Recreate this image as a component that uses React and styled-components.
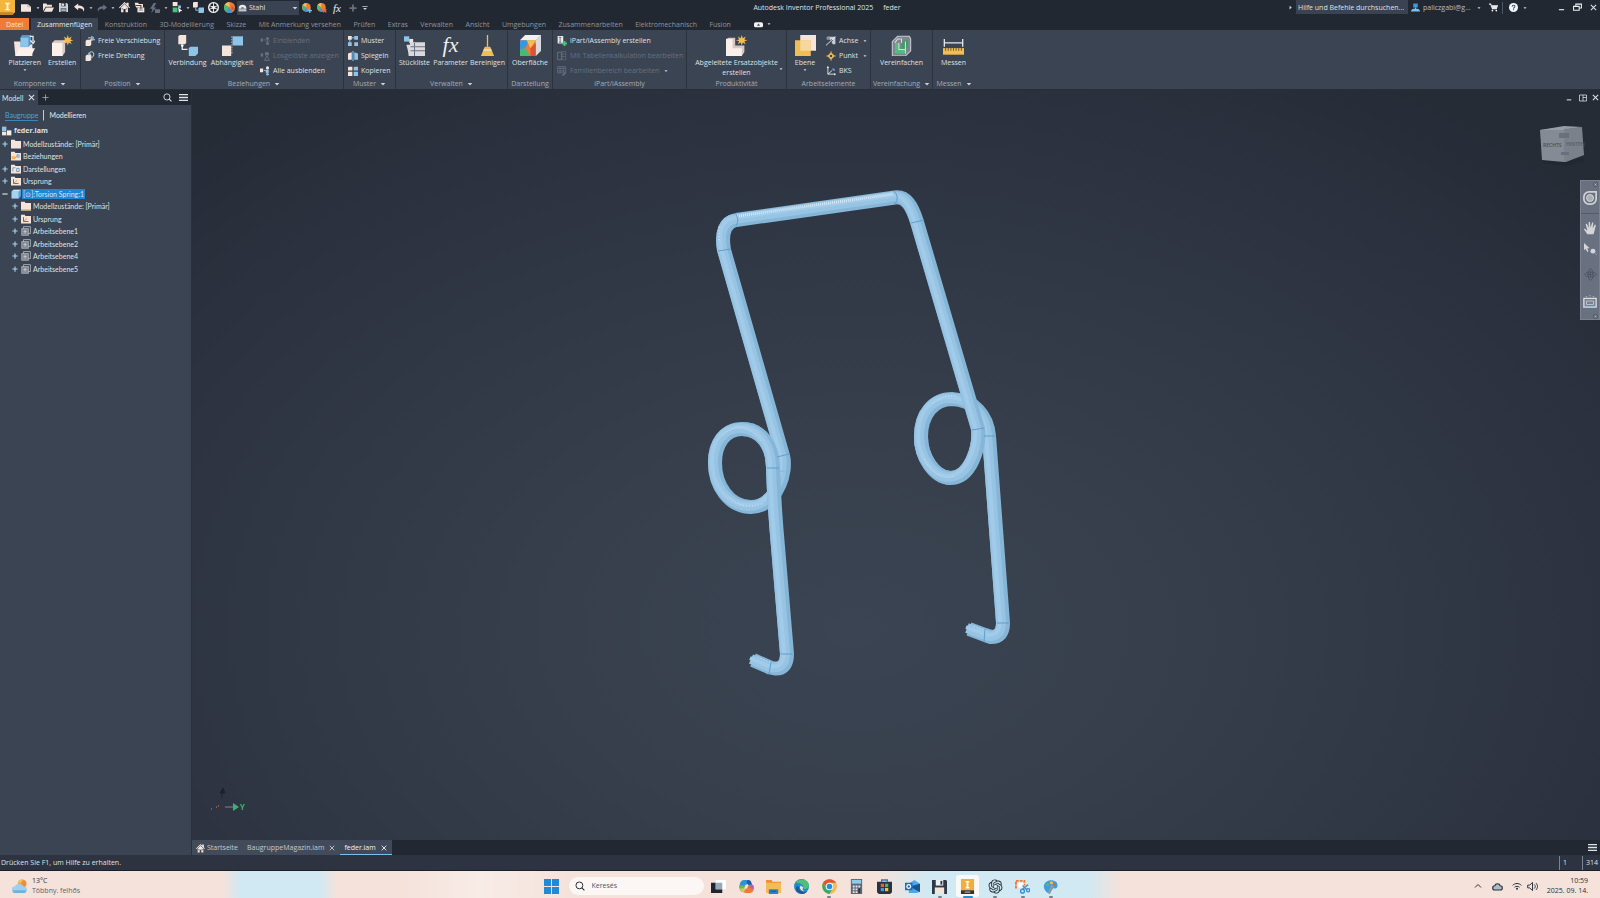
import React, {useState} from "react";
import styled, {createGlobalStyle, css} from "styled-components";
import {RiOpenaiFill} from "react-icons/ri";

const GlobalStyle = createGlobalStyle`
  *{
    box-sizing:border-box;
  }
  html, body, #root{
    height:100%;
  }
  body{
    margin:0;
    overflow:hidden;
    background:#222933;
    font-family:"Open Sans","Noto Sans",sans-serif;
    font-size:7px;
    line-height:10px;
    color:#dfe2e7;
  }
  button, input, select{
    font:inherit;
    color:inherit;
    background:none;
    border:0;
    padding:0;
    margin:0;
  }
  svg{
    display:block;
    flex:none;
  }
`;

const cream = "#f5e4dc";
const blue = "#8ec4e8";
const gold = "#f2bd54";
const grey = "#667080";

/* every drawing uses a 16 x 16 box */
const drawings = {
    logo: <><path d="M0 0h16v13l-2 2H0z" fill="#f2b63c"/><path d="M0 13h14v3H0z" fill="#c9852a"/><path d="M5.500 3h5v1.500H9v5h1.500V11h-5V9.500H7v-5H5.500z" fill="#fff3dc"/></>,
    file: <><path d="M0 2h11l5 4v8H0z" fill={cream}/><path d="M11 2v4h5" fill="none" stroke="#8b8f98"/></>,
    folder: <><path d="M0 2h5l1 2h7v3H4l-4 6z" fill={cream}/><path d="M4.500 8H16l-3 6H1z" fill={cream}/></>,
    save: <><path d="M0 0h14l2 2v14H0z" fill="#cfd1d5"/><path d="M4 0h8v6H4z" fill="#3c4554"/><path d="M5 1h4v4H5z" fill="#dedfe2"/><path d="M3 9h10v7H3z" fill="#4d5665"/><path d="M4 11h8M4 13.500h8" stroke="#fff"/></>,
    undo: <path d="M6 2 0 7l6 5V9c4 0 7 0 8 5 3-6-2-9-8-9z" fill={cream}/>,
    redo: <path d="m10 2 6 5-6 5V9c-4 0-7 0-8 5-3-6 2-9 8-9z" fill={grey}/>,
    home: <><path d="M0 8 8 0l3 3V1h3v5l2 2-1 1-7-7-7 7z" fill={cream}/><path d="M3 8l5-5 5 5v7H9.500v-5h-3v5H3z" fill={cream}/><path d="M4 9h2v2H4zM10 9h2v2h-2z" fill="#6d7480"/></>,
    share: <><path d="M1 1h5l1 2h6v5H3z" fill={cream}/><path d="M5 8h10v7H5z" fill={cream}/><path d="M3 5h7v6" fill="none" stroke="#3c4554" strokeWidth="1.500"/><path d="M7 10h6M7 12h6" stroke="#7c828c"/></>,
    bolt: <><path d="M6 0 0 9h4l-2 7 8-9H6l4-7z" fill={grey}/><path d="M8 10h8v6H8z" fill={grey}/></>,
    pick: <><path d="M1 0h7v6H1z" fill={cream}/><path d="M1 8h7v7H1z" fill="#4bc07a"/><path d="M9 5h4v4H9z" fill={blue}/><path d="m9 8 6 5-3 .5L10 16z" fill="#fff"/></>,
    joint: <><path d="M0 1l1-1h6v7l-1 1H0z" fill={cream}/><path d="M8 9l1-1h7v7l-1 1H8z" fill={blue}/><path d="M4 8v4h4" fill="none" stroke="#e6e8ec"/></>,
    wheel: <><circle cx="8" cy="8" r="7" fill="none" stroke="#f1f1f1" strokeWidth="2"/><circle cx="8" cy="8" r="2.500" fill="#f1f1f1"/><path d="M8 1v14M1.500 5l13 6M1.500 11l13-6" stroke="#f1f1f1" strokeWidth="1.300"/></>,
    ball: <><circle cx="8" cy="8" r="8" fill="#ee7b38"/><path d="M8 0a8 8 0 0 0-7 4l7 4z" fill={gold}/><path d="M1 4a8 8 0 0 0 2 10l5-6z" fill="#49b978"/><path d="M3 14a8 8 0 0 0 9 1L8 8z" fill="#3b97dd"/><path d="M11 5l4 4-4 4z" fill="#e5483c"/></>,
    ballAdd: <><circle cx="7" cy="7" r="7" fill="#ee7b38"/><path d="M7 0a7 7 0 0 0-6 3l6 4z" fill={gold}/><path d="M1 3a7 7 0 0 0 2 9l4-5z" fill="#49b978"/><path d="M3 12a7 7 0 0 0 6 2L7 7z" fill="#3b97dd"/><path d="M9 12h7M12.500 9v7" stroke="#7cc0f0" strokeWidth="2"/></>,
    ballDel: <><circle cx="7" cy="7" r="7" fill="#ee7b38"/><path d="M7 0a7 7 0 0 0-6 3l6 4z" fill={gold}/><path d="M1 3a7 7 0 0 0 2 9l4-5z" fill="#49b978"/><path d="M3 12a7 7 0 0 0 6 2L7 7z" fill="#3b97dd"/><path d="m10 10 5 5m0-5-5 5" stroke="#f06a3a" strokeWidth="2"/></>,
    dome: <><path d="M1 10a7 7 0 0 1 14 0z" fill="#e9e9ea"/><path d="M5 10a3 3 0 0 1 6 0z" fill="#6c7686"/><path d="M1 11h14v4H1z" fill="#c5c8cd"/></>,
    plus: <path d="M8 1v14M1 8h14" stroke={grey} strokeWidth="3.500"/>,
    tri: <path d="M2 5h12l-6 7z" fill="#cfd3da"/>,
    triRight: <path d="M5 2v12l7-6z" fill="#cfd3da"/>,
    barTri: <><path d="M1 4h14" stroke="#cfd3da" strokeWidth="2"/><path d="M3 8h10l-5 5z" fill="#cfd3da"/></>,
    place: <><path d="M0 5h5l1 2h8v9H1z" fill={cream}/><path d="M5 2l1-2h7v7l-2 2H5z" fill="#5596cb"/><path d="M5 2h6v7H5z" fill={blue}/><path d="m1 16 3-6h12l-3 6z" fill="#fbf1ec"/><path d="M12 1h2.500v4M12.500 4l2 2.500 2-2.500" fill="none" stroke="#e6e8ec"/></>,
    create: <><path d="M0 6l2-2h8v9l-2 3H0z" fill="#d8c8c3"/><path d="M0 6h8v10H0z" fill="#fbefe9"/><path d="m12 0 .8 2.500L15 1.200l-1 2.300 2.400.5-2.400.8 1 2.200-2.200-1.300L12 8l-.8-2.300L9 7l1-2.200L7.600 4l2.400-.5-1-2.300 2.200 1.300z" fill={gold}/></>,
    move: <><path d="M1 8l2-2h7v8l-2 2H1z" fill={cream}/><path d="M5 3h6M11 0v8M8 6h8" stroke="#d7dbe2" strokeWidth="1.400"/><path d="m12 0 3 3-3 3z" fill={blue}/></>,
    rotate: <><path d="M1 8l2-2h7v8l-2 2H1z" fill={cream}/><path d="M6 5c1-5 8-5 8 0s-3 6-5 4" fill="none" stroke="#d7dbe2" strokeWidth="1.500"/><path d="m6 2 4 3-5 2z" fill={blue}/></>,
    connect: <><path d="M1 1l1-1h5v6l-1 1H1z" fill={cream}/><path d="M9 10l1-1h6v5l-2 2H9z" fill={blue}/><path d="M4 8v3h4" fill="none" stroke="#e6e8ec"/><circle cx="4" cy="8" r="1" fill="#fff"/></>,
    constrain: <><path d="M8 1h8v7H8z" fill={blue}/><path d="M0 8h7v8H0z" fill={cream}/><path d="M7.500 1v14" stroke="#9aa3b1" strokeDasharray="1 1"/></>,
    relOff: <><path d="M1 4h4v5H1z" fill={grey}/><path d="M6 6h3" stroke={grey}/><circle cx="12" cy="4" r="2.500" fill={grey}/><circle cx="12" cy="12" r="2.500" fill={grey}/><path d="M12 4v8M8 8h8" stroke={grey}/></>,
    relWarn: <><path d="M1 4h4v5H1z" fill={grey}/><path d="M8 2h6v5H8z" fill={grey}/><path d="m11 8 4 7H7z" fill="none" stroke={grey} strokeWidth="1.500"/></>,
    relHide: <><path d="M0 4h5v6H0z" fill={cream}/><path d="M6 7h3" stroke="#fff"/><circle cx="12" cy="3" r="2.500" fill={cream}/><path d="M9 6h5v5H9z" fill={blue}/><circle cx="12" cy="13" r="2" fill={blue}/></>,
    pattern: <><path d="M0 0h6v6H0z" fill={cream}/><path d="M10 0h6v6h-6zM0 10h6v6H0zM10 10h6v6h-6z" fill={blue}/><path d="M6 3h4M3 6v4" stroke="#fff"/></>,
    mirror: <><path d="M0 4l6-2v12H0z" fill={cream}/><path d="M10 2l6 2v10h-6z" fill={blue}/><path d="M8 0v16" stroke="#6ab4ea" strokeWidth="2"/></>,
    copy: <><path d="M0 2l2-1h5v6H0zM0 9h7v7H0z" fill={cream}/><path d="M9 2l2-1h5v6H9zM9 9h7v7H9z" fill={blue}/></>,
    bom: <><path d="M0 1h4v4H0z" fill={blue}/><path d="M4 3h3v3H4z" fill={cream}/><path d="M2 8h2v8M5 6h11v10H5z" fill="#d9dadd" stroke="#d9dadd"/><path d="M5 9h11M5 12h11M8 6v10" stroke="#6b7280" strokeWidth=".8"/></>,
    broom: <><path d="M8 0v9" stroke={gold} strokeWidth="1"/><path d="M6 9h4l1 2 2 5H3l2-5z" fill={gold}/><path d="M5 11.500h6" stroke="#e6e8ec"/></>,
    surface: <><path d="M0 4 4 0h12v12l-4 4H0z" fill="#ee7b38"/><path d="M0 4 4 0h12l-4 4z" fill="#f1f1f1"/><path d="m12 4 4-4v12l-4 4z" fill="#d9dadd"/><path d="M0 4h7L4 10 0 11z" fill="#3b97dd"/><path d="m0 11 4-1 4 6H0z" fill="#49b978"/><path d="M5 4h7L8 10z" fill={gold}/><path d="M8 10l4-4v10H8z" fill="#d95435"/></>,
    ipart: <><path d="M1 0h9v12H1z" fill="#e9eaec"/><path d="M5 2v8M3 2h4M3 10h4" stroke="#4c5666" strokeWidth="1.200"/><path d="M12 8v8M8 12h8" stroke="#4ac17c" strokeWidth="3"/></>,
    sheetOff: <><path d="M1 2h6v12H1z" fill="none" stroke={grey} strokeWidth="1.500"/><path d="M8 1h6v13H8zM8 5h6M8 9h6" fill="none" stroke={grey}/></>,
    tableOff: <><path d="M1 1h13v10H1zM1 4h13M1 8h13M5 1v10M10 1v10" fill="none" stroke={grey} strokeWidth="1.200"/><path d="m7 15 6-5 2 1-4 4z" fill={grey}/></>,
    derive: <><path d="M0 3l2-1h5v6h7v5l-2 3H0z" fill="#d8c8c3"/><path d="M0 3h5v7h7v6H0z" fill="#fbefe9"/><path d="m12 0 .8 2.500L15 1.200l-1 2.300 2.400.5-2.400.8 1 2.200-2.200-1.300L12 8l-.8-2.300L9 7l1-2.200L7.600 4l2.400-.5-1-2.300 2.200 1.300z" fill={gold}/></>,
    plane: <><path d="M4 0h12v12H4z" fill={cream}/><path d="M0 4h12v12H0z" fill={gold}/><path d="M4 4h8v8H4z" fill="#f6d79d"/></>,
    axis: <><path d="M3 1h12v12h-4z" fill="#c9ccd2"/><path d="m1 15 9-9" stroke="#3c4554" strokeWidth="3"/><path d="M0 15 15 1" stroke="#f3f3f4" strokeWidth="1.400"/><path d="M1 1h5v5H1z" fill="#8b93a0"/></>,
    point: <><path d="m8 2 6 6-6 6-6-6z" fill={gold}/><path d="M8 0v16M0 8h16" stroke={gold}/><circle cx="8" cy="8" r="2" fill="#3c4554"/></>,
    ucs: <><path d="M3 1v12h12M3 13l7-6" fill="none" stroke="#e6e8ec" strokeWidth="1.400"/><path d="M1 3l2-3 2 3zM13 11l3 2-3 2z" fill="#e6e8ec"/><path d="M10 5h3v3" fill="none" stroke={blue} strokeWidth="1.500"/></>,
    simplify: <><path d="M1 5 5 1h9l1 2v9l-4 4H1z" fill="#80868f" stroke="#c9ccd1" strokeWidth=".8"/><path d="M3 6h3v5h5v3H3z" fill="#4fbf7d"/><path d="M8 5l2-1h3v5l-2 2H8z" fill="#3f9c6b"/><path d="M3 6l2-3h3v3M6 6v5h5M11 5v9" fill="none" stroke="#d5dade" strokeWidth=".8"/></>,
    measure: <><path d="M1 3v6M15 3v6M1 6h14" stroke="#e6e8ec"/><path d="M0 10h16v5H0z" fill={gold}/><path d="M2 10v2M4 10v2M6 10v2M8 10v2M10 10v2M12 10v2M14 10v2" stroke="#6a5423" strokeWidth=".7"/></>,
    camera: <><rect x="0" y="4" width="16" height="9" rx="3" fill="#f3f3f4"/><path d="M5 10h6l-3-4z" fill="#4b5463"/></>,
    user: <><path d="M4 1h8v7H4z" fill="#3d9be2"/><path d="M0 15c0-4 3-5 8-5s8 1 8 5z" fill="#7cc0f0"/><path d="M7 8h2v3H7z" fill="#7cc0f0"/></>,
    cart: <><path d="M0 2h3l3 8h7l2-5H5" fill="none" stroke="#e6e8ec" strokeWidth="1.800"/><path d="M5 5h10l-2 5H6z" fill="#e6e8ec"/><circle cx="6" cy="13.500" r="1.500" fill="#fff"/><circle cx="13" cy="13.500" r="1.500" fill="#fff"/></>,
    help: <><circle cx="8" cy="8" r="8" fill="#f6f7f8"/><path d="M5.500 6.500c0-3.500 5-3.500 5-.5 0 2-2.500 2-2.500 4M8 11v2" fill="none" stroke="#2a5b8c" strokeWidth="1.800"/></>,
    min: <path d="M2 13h12" stroke="#f1f2f4" strokeWidth="2.500"/>,
    restore: <path d="M5 5V2h10v7h-4M1 6h10v7H1z" fill="none" stroke="#f1f2f4" strokeWidth="1.800"/>,
    tile: <path d="M1 2h14v12H1zM8 2v12M8 7h7" fill="none" stroke="#dfe3e8" strokeWidth="1.500"/>,
    close: <path d="m2 2 12 12M14 2 2 14" stroke="currentColor" strokeWidth="2.400"/>,
    thinPlus: <path d="M8 1v14M1 8h14" stroke="#aab0ba" strokeWidth="1.800"/>,
    search: <><circle cx="7" cy="7" r="5.500" fill="none" stroke="currentColor" strokeWidth="1.600"/><path d="m11 11 4 4" stroke="currentColor" strokeWidth="1.800"/></>,
    menu: <path d="M0 3h16M0 8h16M0 13h16" stroke="currentColor" strokeWidth="2.400"/>,
    asm: <><path d="M0 1h7v7H0z" fill={blue}/><path d="M0 9h7v6H0z" fill={cream}/><path d="M8 7h7v8H8z" fill="#f8efe9"/></>,
    tFolder: <path d="M0 1h6l1 2h9v12H0z" fill={cream}/>,
    tGold: <><path d="M0 1h6l1 2h9v12H0z" fill={cream}/><path d="M0 13h16v2H0z" fill={gold}/></>,
    tRel: <><path d="M0 1h6l1 2h9v12H0z" fill={cream}/><path d="M1 8h5v5H1z" fill={gold}/><path d="M9 5h5v6H9z" fill={blue}/><path d="m5 13 6-7" stroke="#d96a3a"/></>,
    tView: <><path d="M0 1h6l1 2h9v12H0z" fill={cream}/><path d="M3 6v6M3 6h4M9 7h4v5H9z" fill="none" stroke="#5a93bd" strokeWidth="1.300"/></>,
    tOrigin: <><path d="M0 1h6l1 2h9v12H0z" fill={cream}/><path d="M4 5v7h8" fill="none" stroke="#4b5463" strokeWidth="1.300"/><path d="m5 11 5-4" stroke="#d99a3a" strokeWidth="1.500"/></>,
    tPart: <><path d="M1 4l3-3h12v10l-3 4H1z" fill="#5c9fd2"/><path d="M1 4h11v11H1z" fill="#a6d2f0"/><path d="M1 4l3-3h12l-4 3z" fill="#c9e4f6"/></>,
    tPlane: <><path d="M4 1h11v11H4z" fill="none" stroke="#a9adb4" strokeWidth="1.500"/><path d="M1 4h11v11H1z" fill="#858b95" stroke="#b7bac0"/><path d="M4 9h5M6.500 6v6" stroke="#dfe1e4"/></>,
    expand: <path d="M8 1v14M1 8h14" stroke="#a7d3ea" strokeWidth="3"/>,
    collapse: <path d="M1 8h14" stroke="#dfe6ee" strokeWidth="3"/>,
    navWheel: <><path d="M8 1h7v8a6 6 0 0 1-6 6H7a6 6 0 0 1-6-6V7a6 6 0 0 1 6-6z" fill="none" stroke="#cdd0d4" strokeWidth="2"/><circle cx="8" cy="8" r="4" fill="#a9adb4" stroke="#dfe1e4"/></>,
    hand: <path d="M5 15 1 9.500l1-1L5 11 3 3.500 4.500 3l2 5L6.500 1H8l.7 6.700L10.500 1.500l1.300.4L11 8.500l2.500-4.500 1.300.7L13 12l-1 3z" fill="#d3d5d8"/>,
    zoomPick: <><path d="M0 0v9l2-2 2 4 1.500-1L4 6.500h3z" fill="#d3d5d8"/><circle cx="11" cy="10" r="3" fill="#d3d5d8"/><path d="m13 12 3 3" stroke="#a6abb3"/></>,
    orbit: <g fill="none" stroke="#49525f"><ellipse cx="8" cy="8" rx="7" ry="3"/><ellipse cx="8" cy="8" rx="3" ry="7"/><path d="M8 4v8M4 8h8"/></g>,
    lookAt: <><path d="M1 5h14v10H1z" fill="#7b828e" stroke="#dcdee1" strokeWidth="1.500"/><path d="M4 8h8v4H4z" fill="none" stroke="#c5c8cd"/><path d="M2 14.500h12" stroke={blue}/><path d="M3 3h2M7 2h2M11 3h2" stroke="#a9adb4"/></>,
    dot: <><circle cx="8" cy="8" r="7" fill="none" stroke="#454d5a" strokeWidth="2"/><path d="m5 5 6 6M11 5l-6 6" stroke="#c5c8cd" strokeWidth="2"/></>,
    weather: <><circle cx="11" cy="5" r="4.500" fill="#ef8d3d"/><path d="M6 4c1-3 4-4 6-3L9 5z" fill={gold}/><path d="M3 15a3.500 3.500 0 0 1 0-7c1-4 8-4 9 0a3.500 3.500 0 0 1 1 7z" fill="#a3cfea"/><path d="M1 12h14c0 2-1 3-2 3H3c-1 0-2-1-2-3z" fill="#6fb0dc"/></>,
    win: <path d="M0 0h7.500v7.500H0zM8.500 0H16v7.500H8.500zM0 8.500h7.500V16H0zM8.500 8.500H16V16H8.500z" fill="#1f8ad8"/>,
    taskView: <><path d="M5 1h11v10H5z" fill="#fff"/><path d="M0 4h5v7h7v4H0z" fill="#20252e"/><path d="M5 4h7v7H5z" fill="#9aa9b6"/></>,
    copilot: <><path d="M5 1h5L7 9H1C0 5 2 1 5 1z" fill="#2f93da"/><path d="M9 1c4 0 4 2 5 5l-4 1-2-3z" fill="#1b5fa8"/><path d="M0 7h7l-2 7c-4 0-5-4-5-7z" fill="#69b95c"/><path d="M1 10h6l-2 4c-2 0-3-2-4-4z" fill={gold}/><path d="M5 14 9 7h6c2 4 0 8-4 8H7z" fill="#ef7a35"/><path d="M11 6h4c1 2 1 3 0 5l-4-2z" fill="#b95fae"/><path d="M7 6h3L8.500 10H5.500z" fill="#f4e2db"/></>,
    explorer: <><path d="M0 1h6l1 2h9v5H0z" fill="#ef8f3a"/><path d="M0 4h16v11H0z" fill={gold}/><path d="M3 11h10v5H3z" fill="#2a82c8"/><path d="M5 13h6" stroke="#14568c"/></>,
    edge: <><circle cx="8" cy="8" r="8" fill="#2589cf"/><path d="M2 4c3-5 13-5 14 3 0 4-5 4-6 3 1-4-3-6-8-6z" fill="#4ec07a"/><path d="M5 8c0 5 5 7 9 5-3 5-11 3-12-2 0-3 1-4 3-3z" fill="#175a96"/><path d="M7 7c-2 4 1 7 7 6-4 1-6-2-4-4z" fill="#f4e2db"/></>,
    chrome: <><circle cx="8" cy="8" r="8" fill={gold}/><path d="M1 4C4-1 12-1 15 4H8L5 9z" fill="#e5532f"/><path d="M1 4C-1 8 1 15 8 16l4-7-7 1z" fill="#3aa86a"/><circle cx="8" cy="8" r="4" fill="#fff"/><circle cx="8" cy="8" r="3" fill="#2a8be0"/></>,
    calc: <><path d="M2 0h12v16H2z" fill="#5d6672"/><path d="M3 1h10v4H3z" fill="#8fcbea"/><path d="M4 7h2v2H4zM7 7h2v2H7zM10 7h2v2h-2zM4 10h2v2H4zM7 10h2v2H7zM4 13h2v2H4zM7 13h2v2H7z" fill="#e6e8ec"/><path d="M10 10h2v5h-2z" fill="#2d3540"/></>,
    store: <><path d="M5 3V1h6v2" fill="none" stroke="#3579b3" strokeWidth="1.500"/><path d="M0 3h16v11l-2 2H2l-2-2z" fill="#283442"/><path d="M4 5h3.500v3.500H4z" fill="#e2623b"/><path d="M8.500 5H12v3.500H8.500z" fill="#57ad5a"/><path d="M4 9.500h3.500V13H4z" fill="#3c9be0"/><path d="M8.500 9.500H12V13H8.500z" fill={gold}/></>,
    outlook: <><path d="m4 5 6-4 6 4v8l-3 2H4z" fill="#4da9e6"/><path d="m5 8 11 6V5z" fill="#17558e"/><path d="M0 4h8v8H0z" fill="#1b6fba"/><circle cx="4" cy="8" r="2" fill="none" stroke="#fff" strokeWidth="1.300"/></>,
    floppy: <><path d="M0 1h15l1 1v14H0z" fill="#2f3843"/><path d="M4 1h8v6H4z" fill="#e9f1f5"/><path d="M9 2h2v4H9z" fill="#2f3843"/><path d="M3 9h10v7H3z" fill="#f3e4de"/></>,
    inventor: <><path d="M1 0h14v12H1z" fill="#efae3d"/><path d="M1 12h14v4H1z" fill="#3a3128"/><path d="M6 2h4v1.500H9v5h1V10H6V8.500h1v-5H6z" fill="#fff"/><path d="M5 14h6" stroke="#d8c9b5"/></>,
    snip: <><path d="M1 10V2h9v5" fill="none" stroke="#ee7b38" strokeWidth="2" strokeDasharray="3 1"/><path d="M3 4h6v5H3z" fill="#fff"/><path d="m8 7 5 5M14 6l-6 5" stroke="#5d8db4" strokeWidth="1.500"/><circle cx="8" cy="13" r="2" fill="none" stroke="#3a8fd0" strokeWidth="1.500"/><circle cx="14" cy="12" r="1.700" fill="none" stroke="#3a8fd0" strokeWidth="1.500"/></>,
    paint: <><path d="M1 9C0 2 9-1 14 3c3 4 1 8-2 7-3-1-3 2-4 5-3 1-6-2-7-6z" fill="#3e9cdf"/><circle cx="5" cy="6" r="1.700" fill="#57b96a"/><circle cx="9" cy="4" r="1.700" fill={gold}/><path d="m9 5 3 3-5 8-2-1z" fill="#8c9aa6"/><circle cx="12" cy="6" r="1.500" fill="#e5623b"/></>,
    chevron: <path d="m2 11 6-6 6 6" fill="none" stroke="#27303b" strokeWidth="2"/>,
    cloud: <path d="M4 13a3 3 0 0 1 0-6c1-4 7-4 8 0a3 3 0 0 1 0 6z" fill="#aebbc6" stroke="#27303b" strokeWidth="1.600"/>,
    wifi: <><path d="M1 7c4-4 10-4 14 0M4 10c2-2 6-2 8 0" fill="none" stroke="#27303b" strokeWidth="1.600"/><circle cx="8" cy="12.500" r="1.600" fill="#27303b"/></>,
    sound: <><path d="M1 6h3l4-4v12l-4-4H1z" fill="none" stroke="#27303b" strokeWidth="1.400"/><path d="M10.500 5c2 2 2 4 0 6M13 3c3 3 3 7 0 10" fill="none" stroke="#27303b" strokeWidth="1.400"/></>,
};

const Icon = ({name, size = 11}) => (
    <svg width={size} height={size} viewBox="0 0 16 16" aria-hidden="true">{drawings[name]}</svg>
);

const quickItems = [
    ["logo", 18, 15], ["file", 16, 10], ["tri", 7, 4], ["folder", 15, 11], ["save", 15, 9], ["undo", 16, 11],
    ["tri", 7, 4], ["redo", 15, 10], ["tri", 8, 4], ["home", 15, 11], ["share", 15, 11], ["bolt", 15, 10],
    ["tri", 8, 4], ["pick", 14, 11], ["tri", 7, 4], ["joint", 15, 11], ["wheel", 15, 11], ["ball", 16, 11],
];

const tabs = ["Zusammenfügen", "Konstruktion", "3D-Modellierung", "Skizze", "Mit Anmerkung versehen", "Prüfen", "Extras",
    "Verwalten", "Ansicht", "Umgebungen", "Zusammenarbeiten", "Elektromechanisch", "Fusion"];

const groups = [
    {title: "Komponente", more: true, width: 81, big: [["place", "Platzieren", 40, true], ["create", "Erstellen", 36]], pad: 5},
    {title: "Position", more: true, width: 84, small: [["move", "Freie Verschiebung"], ["rotate", "Freie Drehung"]]},
    {title: "Beziehungen", more: true, width: 179, pad: 2, big: [["connect", "Verbindung", 41], ["constrain", "Abhängigkeit", 48]],
        small: [["relOff", "Einblenden", true], ["relWarn", "Losgelöste anzeigen", true], ["relHide", "Alle ausblenden"]]},
    {title: "Muster", more: true, width: 52, small: [["pattern", "Muster"], ["mirror", "Spiegeln"], ["copy", "Kopieren"]]},
    {title: "Verwalten", more: true, width: 112, pad: 1, big: [["bom", "Stückliste", 35], ["fx", "Parameter", 37], ["broom", "Bereinigen", 37]]},
    {title: "Darstellung", width: 45, big: [["surface", "Oberfläche", 44]]},
    {title: "iPart/iAssembly", width: 134, small: [["ipart", "iPart/iAssembly erstellen"], ["sheetOff", "Mit Tabellenkalkulation bearbeiten", true], ["tableOff", "Familienbereich bearbeiten", true, true]]},
    {title: "Produktivität", width: 100, big: [["derive", "Abgeleitete Ersatzobjekte erstellen", 99, true]]},
    {title: "Arbeitselemente", width: 84, pad: 1, big: [["plane", "Ebene", 34, true]], small: [["axis", "Achse", false, true], ["point", "Punkt", false, true], ["ucs", "BKS"]]},
    {title: "Vereinfachung", more: true, width: 62, big: [["simplify", "Vereinfachen", 61]]},
    {title: "Messen", more: true, width: 42, big: [["measure", "Messen", 41]]},
];

const tree = [
    ["asm", "feder.iam", -1, ""],
    ["tFolder", "Modellzustände: [Primär]", 0, "expand"],
    ["tRel", "Beziehungen", 0, ""],
    ["tView", "Darstellungen", 0, "expand"],
    ["tOrigin", "Ursprung", 0, "expand"],
    ["tPart", "[⊙]:Torsion Spring:1", 0, "collapse"],
    ["tGold", "Modellzustände: [Primär]", 1, "expand"],
    ["tOrigin", "Ursprung", 1, "expand"],
    ["tPlane", "Arbeitsebene1", 1, "expand"],
    ["tPlane", "Arbeitsebene2", 1, "expand"],
    ["tPlane", "Arbeitsebene4", 1, "expand"],
    ["tPlane", "Arbeitsebene5", 1, "expand"],
];

const apps = [["taskView", "Aktív feladatok"], ["copilot", "Copilot"], ["explorer", "Fájlkezelő"], ["edge", "Edge"], ["chrome", "Chrome", true],
    ["calc", "Számológép"], ["store", "Store"], ["outlook", "Outlook"], ["floppy", "Mentés", true], ["inventor", "Inventor", true],
    ["gpt", "ChatGPT", true], ["snip", "Képmetsző", true], ["paint", "Paint", true]];

/* wire pieces from back to front */
const wires = [
    "M783 456C787 480 772 508 750 507C729 506 715 486 715 463C715 444 725 429 742 429C762 429 773 447 773 468",
    "M736 220C726 222 721 232 724 250L783 456C784 462 784 466 783 472",
    "M742 429C762 429 773 447 773 468C774 500 776 525 778 547L787 654C787 664 783 669 775 668.500L770 667.500L753 660",
    "M950 478C934 477 921 457 921 437C921 414 934 399 952 399C974 400 987 415 989 436L1003 623C1003 633 999 637 991 637L985 635L969 629",
    "M736 220L895 197.500C906 196 912 206 917 222L978 429C980 447 971 478 950 478C934 477 921 457 921 437",
];
const seams = ["M718 251l13-2", "M735 213q5 6 1 13", "M894 191q6 6 1 13", "M911 223l13-3", "M777 457l12-3", "M767 468h12",
    "M781 654h12", "M771 662l-2 12", "M972 430l12-2", "M984 436h12", "M997 623h12", "M985 629l-1 13"];

const Spring = () => (
    <Canvas viewBox="192 90 1408 750" role="img" aria-label="Torsion Spring">
        {wires.map((d, i) => (
            <g key={i} fill="none" strokeLinejoin="round">
                <path d={d} stroke="#85b5d7" strokeWidth="14"/>
                <path d={d} stroke="#98c4e4" strokeWidth="10" transform="translate(-2 -1)"/>
                <path d={d} stroke="#a1cbe9" strokeWidth="4" transform="translate(-3 -2)"/>
            </g>
        ))}
        <path d="M737 216L893 194" stroke="#d6e8f4" strokeWidth="3" strokeDasharray="1 1"/>
        <path d="M722 436Q742 416 762 442M730 498Q745 511 764 503M932 404Q944 394 956 396M924 459Q938 482 954 476M758 657l14 6M974 626l14 6M719 240v-14" stroke="#d6e8f4" strokeDasharray="1 2" fill="none"/>
        {seams.map(d => <path key={d} d={d} stroke="#5c9fd0" fill="none"/>)}
        {/* axis triad */}
        <g>
            <path d="M222 798v-8M220 793l3-5 2 5z" stroke="#1d232c" fill="#1d232c"/>
            <path d="M211 809h1M216 807h1M218 806h1" stroke="#e07a3c" strokeWidth="1"/>
            <path d="M225 807h8" stroke="#7c858f"/>
            <path d="m233 803 6 4-6 4z" fill="#3fae72"/>
            <text x="240" y="810" fill="#46c67f" fontSize="8" fontWeight="600">Y</text>
        </g>
    </Canvas>
);

const ViewCube = () => (
    <CubeSvg width="50" height="42" viewBox="0 0 50 42" role="img" aria-label="ViewCube">
        <path d="M4 37l25 3 17-4v-4H4z" fill="#1f252e" opacity=".6"/>
        <path d="M2 4 26 1v35L4 34z" fill="#858b95"/>
        <path d="M2 4 26 0l18 1-18 3z" fill="#989da6"/>
        <path d="M26 3 44 1l2 28-18 7h-2z" fill="#7a818b"/>
        <path d="M21 7h10v5H21zM23 26h8v3h-8z" fill="#69707b"/>
        <text x="5" y="21" fontSize="5" fill="#444b57" fontWeight="600">RECHTS</text>
        <text x="28" y="20" fontSize="5" fill="#555c68" fontWeight="600">HINTEN</text>
    </CubeSvg>
);

export default function App() {
    const [activeTab, setActiveTab] = useState("Zusammenfügen");
    const [help, setHelp] = useState("");

    return (
        <Shell>
            <GlobalStyle/>
            <TitleBar>
                {quickItems.map(([name, width, size], i) => (
                    <Tool key={i} $w={width} $left={name === "logo"} aria-label={name}><Icon name={name} size={size}/></Tool>
                ))}
                <Material>
                    <Icon name="dome" size={9}/>
                    <select aria-label="Material" defaultValue="Stahl">
                        <option>Stahl</option>
                    </select>
                    <Icon name="tri" size={6}/>
                </Material>
                <Tool $w={15} aria-label="ballAdd"><Icon name="ballAdd" size={10}/></Tool>
                <Tool $w={15} aria-label="ballDel"><Icon name="ballDel" size={10}/></Tool>
                <Tool $w={16} aria-label="fx"><Fx>fx</Fx></Tool>
                <Tool $w={15} aria-label="plus"><Icon name="plus" size={8}/></Tool>
                <Tool $w={10} aria-label="more"><Icon name="barTri" size={6}/></Tool>
                <Caption><span>Autodesk Inventor Professional 2025</span><span>feder</span></Caption>
                <Tool $w={12} aria-label="expand"><Icon name="triRight" size={5}/></Tool>
                <HelpInput aria-label="Hilfe" placeholder="Hilfe und Befehle durchsuchen..." value={help} onChange={e => setHelp(e.target.value)}/>
                <Tool $w={15} aria-label="user"><Icon name="user" size={9}/></Tool>
                <Account>paliczgabi@g...</Account>
                <Tool $w={10} aria-label="account menu"><Icon name="tri" size={4}/></Tool>
                <Tool $w={18} aria-label="cart"><Icon name="cart" size={9}/></Tool>
                <Divider/>
                <Tool $w={20} aria-label="help"><Icon name="help" size={9}/></Tool>
                <Tool $w={31} $left aria-label="help menu"><Icon name="tri" size={4}/></Tool>
                <Tool $w={14} aria-label="minimize"><Icon name="min" size={7}/></Tool>
                <Tool $w={18} aria-label="restore"><Icon name="restore" size={9}/></Tool>
                <Tool $w={14} aria-label="close"><Icon name="close" size={7}/></Tool>
            </TitleBar>

            <TabBar>
                <FileTab>Datei</FileTab>
                <TabList>
                    {tabs.map(t => (
                        <Tab key={t} $active={t === activeTab} onClick={() => setActiveTab(t)}>{t}</Tab>
                    ))}
                </TabList>
                <Tool $w={26} aria-label="camera"><Icon name="camera" size={9}/><Icon name="tri" size={4}/></Tool>
            </TabBar>

            <Ribbon>
                {groups.map(g => (
                    <Group key={g.title} $w={g.width}>
                        <GroupBody $pad={g.pad}>
                            {g.big && g.big.map(([icon, label, width, menu]) => (
                                <BigButton key={label} $w={width}>
                                    {icon === "fx" ? <BigFx>fx</BigFx> : <Icon name={icon} size={21}/>}
                                    <BigLabel>{label}</BigLabel>
                                    {menu && <MenuArrow $side={icon === "derive"}><Icon name="tri" size={4}/></MenuArrow>}
                                </BigButton>
                            ))}
                            {g.small && (
                                <SmallColumn>
                                    {g.small.map(([icon, label, off, menu]) => (
                                        <SmallButton key={label} disabled={!!off}>
                                            <Icon name={icon} size={10}/>
                                            <span>{label}</span>
                                            {menu && <Icon name="tri" size={4}/>}
                                        </SmallButton>
                                    ))}
                                </SmallColumn>
                            )}
                        </GroupBody>
                        <GroupTitle>{g.title}{g.more && <Icon name="tri" size={6}/>}</GroupTitle>
                    </Group>
                ))}
            </Ribbon>

            <Main>
                <Side>
                    <SideHead>
                        <SideTab>Modell <Icon name="close" size={7}/></SideTab>
                        <Tool $w={14} aria-label="add"><Icon name="thinPlus" size={7}/></Tool>
                        <Spacer/>
                        <Tool $w={15} aria-label="search"><Icon name="search" size={9}/></Tool>
                        <Tool $w={16} aria-label="menu"><Icon name="menu" size={9}/></Tool>
                    </SideHead>
                    <Modes>
                        <Mode $active>Baugruppe</Mode>
                        <Mode>Modellieren</Mode>
                    </Modes>
                    <Tree>
                        {tree.map(([icon, label, level, toggle], i) => (
                            <Node key={i} $level={level}>
                                {level >= 0 && <Toggle aria-label="toggle">{toggle && <Icon name={toggle} size={6}/>}</Toggle>}
                                <Icon name={icon} size={10}/>
                                <NodeLabel $root={level < 0} $selected={icon === "tPart"}>{label}</NodeLabel>
                            </Node>
                        ))}
                    </Tree>
                </Side>

                <Work>
                    <Viewport>
                        <Spring/>
                        <Overlay>
                            <DocButtons>
                                <Tool $w={14} aria-label="minimize document"><Icon name="min" size={6}/></Tool>
                                <Tool $w={14} aria-label="tile"><Icon name="tile" size={8}/></Tool>
                                <Tool $w={10} aria-label="close document"><Icon name="close" size={7}/></Tool>
                            </DocButtons>
                            <ViewCube/>
                            <NavBar>
                                <NavEnd><Icon name="dot" size={5}/></NavEnd>
                                <NavTool $h={22} aria-label="Navigationsrad"><Icon name="navWheel" size={14}/></NavTool>
                                <NavRule/>
                                <NavTool $h={22} aria-label="Pan"><Icon name="hand" size={14}/></NavTool>
                                <NavTool $h={20} aria-label="Zoom"><Icon name="zoomPick" size={13}/></NavTool>
                                <NavTool $h={30} aria-label="Orbit"><Icon name="orbit" size={13}/></NavTool>
                                <NavTool $h={24} aria-label="Ausrichten nach"><Icon name="lookAt" size={14}/></NavTool>
                                <NavEnd><Icon name="dot" size={5}/></NavEnd>
                            </NavBar>
                        </Overlay>
                    </Viewport>
                    <DocTabs>
                        <DocTab><Icon name="home" size={9}/>Startseite</DocTab>
                        <DocTab>BaugruppeMagazin.iam <Icon name="close" size={6}/></DocTab>
                        <DocTab $active>feder.iam <Icon name="close" size={6}/></DocTab>
                        <Spacer/>
                        <Tool $w={15} aria-label="documents"><Icon name="menu" size={9}/></Tool>
                    </DocTabs>
                </Work>
            </Main>

            <Status>
                <span>Drücken Sie F1, um Hilfe zu erhalten.</span>
                <Spacer/>
                <Count $w={23}>1</Count>
                <Count $w={18}>314</Count>
            </Status>

            <Taskbar>
                <Weather>
                    <Icon name="weather" size={15}/>
                    <div>
                        <div>13°C</div>
                        <Sub>Többny. felhős</Sub>
                    </div>
                </Weather>
                <Dock>
                    <AppButton $fixed aria-label="Start"><Icon name="win" size={15}/></AppButton>
                    <SearchBox>
                        <Icon name="search" size={10}/>
                        <input aria-label="Keresés" placeholder="Keresés"/>
                    </SearchBox>
                    <Apps>
                        {apps.map(([name, label, running]) => (
                            <AppButton key={name} aria-label={label} $running={running} $active={name === "inventor"}>
                                {name === "gpt" ? <RiOpenaiFill size={17}/> : <Icon name={name} size={15}/>}
                            </AppButton>
                        ))}
                    </Apps>
                </Dock>
                <Tray>
                    <Tool $w={19} aria-label="chevron"><Icon name="chevron" size={8}/></Tool>
                    <Tool $w={20} aria-label="cloud"><Icon name="cloud" size={11}/></Tool>
                    <Tool $w={18} aria-label="wifi"><Icon name="wifi" size={10}/></Tool>
                    <Tool $w={14} aria-label="sound"><Icon name="sound" size={11}/></Tool>
                    <Clock><div>10:59</div><div>2025. 09. 14.</div></Clock>
                </Tray>
            </Taskbar>
        </Shell>
    );
}

const Shell = styled.div`
  display:flex;
  flex-direction:column;
  height:100vh;
`;

const Tool = styled.button`
  display:flex;
  align-items:center;
  justify-content:${p => p.$left ? "flex-start" : "center"};
  gap:4px;
  flex:none;
  width:${p => p.$w}px;
  height:100%;
`;

const Spacer = styled.div`
  flex:1;
`;

const TitleBar = styled.header`
  display:flex;
  align-items:center;
  flex:none;
  height:15px;
  background:#222831;
`;

const Material = styled.label`
  display:flex;
  align-items:center;
  gap:2px;
  width:62px;
  height:14px;
  padding:0 1px;
  background:#3a4352;
  select{
    flex:1;
    min-width:0;
    appearance:none;
    outline:none;
  }
`;

const Fx = styled.span`
  font:italic 11px/12px "Liberation Serif",serif;
  color:#eceef0;
`;

const Caption = styled.div`
  flex:1;
  display:flex;
  justify-content:center;
  gap:10px;
  white-space:nowrap;
`;

const HelpInput = styled.input`
  width:112px;
  height:14px;
  padding:0 2px;
  background:#3a4352;
  align-self:flex-start;
  outline:none;
  &::placeholder{
    color:#dfe2e6;
    opacity:1;
  }
`;

const Account = styled.span`
  width:51px;
  color:#b9bec7;
  white-space:nowrap;
`;

const Divider = styled.span`
  width:1px;
  height:12px;
  background:#4c5563;
`;

const TabBar = styled.nav`
  display:flex;
  flex:none;
  height:15px;
  padding-top:3px;
  background:#222831;
  ${Tool}{
    margin-left:12px;
  }
`;

const TabList = styled.div`
  display:flex;
  justify-content:space-between;
  width:706px;
`;

const Tab = styled.button`
  height:12px;
  padding:1px 6px 0;
  white-space:nowrap;
  color:${p => p.$active ? "#e6e8ec" : "#8d949f"};
  background:${p => p.$active ? "#3b4453" : "none"};
`;

const FileTab = styled(Tab)`
  width:29px;
  margin-right:2px;
  color:#fde6cf;
  background:#ee7b36;
`;

const Ribbon = styled.section`
  display:flex;
  flex:none;
  height:60px;
  background:#3b4453;
  border-bottom:1px solid #272e39;
`;

const Group = styled.div`
  display:flex;
  flex-direction:column;
  flex:none;
  width:${p => p.$w}px;
  border-right:1px solid #2c333f;
  &:last-child{
    border-right:0;
  }
`;

const GroupBody = styled.div`
  display:flex;
  flex:1;
  padding:3px 0 0 ${p => p.$pad || 0}px;
`;

const GroupTitle = styled.div`
  display:flex;
  justify-content:center;
  align-items:center;
  gap:4px;
  height:11px;
  color:#a4aab4;
`;

const BigButton = styled.button`
  position:relative;
  display:flex;
  flex-direction:column;
  align-items:center;
  width:${p => p.$w}px;
  padding-top:2px;
`;

const BigLabel = styled.span`
  margin-top:2px;
`;

const BigFx = styled.span`
  height:21px;
  font:italic 22px/20px "Liberation Serif",serif;
  color:#eceef0;
`;

const MenuArrow = styled.span`
  ${p => p.$side && css`
    position:absolute;
    right:3px;
    bottom:7px;
  `}
`;

const SmallColumn = styled.div`
  display:flex;
  flex-direction:column;
  padding-left:4px;
`;

const SmallButton = styled.button`
  display:flex;
  align-items:center;
  gap:3px;
  height:15px;
  white-space:nowrap;
  &:disabled{
    color:#667080;
  }
  span + svg{
    margin-left:2px;
  }
`;

const Main = styled.main`
  display:flex;
  flex:1;
  min-height:0;
`;

const Side = styled.aside`
  display:flex;
  flex-direction:column;
  flex:none;
  width:192px;
  background:#3b4453;
  border-right:1px solid #2a313c;
`;

const SideHead = styled.div`
  display:flex;
  align-items:center;
  height:15px;
  background:#222831;
`;

const SideTab = styled.button`
  display:flex;
  align-items:center;
  gap:5px;
  height:15px;
  width:38px;
  padding-left:2px;
  font-family:Lato,"Open Sans",sans-serif;
  background:#3b4453;
`;

const Modes = styled.div`
  display:flex;
  padding:5px 5px 4px;
  font-family:Lato,"Open Sans",sans-serif;
`;

const Mode = styled.button`
  height:11px;
  color:${p => p.$active ? "#4ba3df" : "#e6e8ec"};
  border-bottom:1px solid ${p => p.$active ? "#3f86b8" : "transparent"};
  & + &{
    margin-left:5px;
    padding-left:5px;
    border-left:1px solid #c8ccd2;
  }
`;

const Tree = styled.ul`
  display:grid;
  grid-template-rows:repeat(12, 1fr);
  height:150px;
  margin:0;
  padding:0;
  font-family:Lato,"Open Sans",sans-serif;
`;

const Node = styled.li`
  display:flex;
  align-items:center;
  gap:1px;
  padding-left:${p => p.$level > 0 ? 12 : 2}px;
`;

const Toggle = styled.button`
  display:flex;
  width:8px;
  justify-content:flex-start;
`;

const NodeLabel = styled.span`
  padding:0 1px;
  white-space:nowrap;
  background:${p => p.$selected ? "#1f87d6" : "none"};
  ${p => p.$root && css`
    font-family:"Open Sans",sans-serif;
    font-weight:700;
  `}
`;

const Work = styled.div`
  display:flex;
  flex-direction:column;
  flex:1;
  min-width:0;
`;

const Viewport = styled.section`
  display:grid;
  flex:1;
  min-height:0;
  background:radial-gradient(ellipse 70% 88% at 47% 72%, #3a4452 0%, #373f4c 30%, #313845 58%, #2b313e 80%, #262c36 100%);
  & > *{
    grid-area:1 / 1;
    min-height:0;
    min-width:0;
  }
`;

const Canvas = styled.svg`
  width:100%;
  height:100%;
`;

const Overlay = styled.div`
  display:flex;
  flex-direction:column;
  align-items:flex-end;
`;

const DocButtons = styled.div`
  display:flex;
  height:15px;
`;

const CubeSvg = styled.svg`
  margin:21px 12px 0 0;
`;

const NavBar = styled.div`
  display:flex;
  flex-direction:column;
  align-items:center;
  width:20px;
  margin-top:12px;
  background:#697180;
  border:1px solid #7b828f;
`;

const NavEnd = styled.div`
  align-self:flex-end;
  height:6px;
  padding:1px;
`;

const NavRule = styled.div`
  align-self:stretch;
  height:1px;
  margin:4px 0 3px;
  background:#535b69;
`;

const NavTool = styled.button`
  display:flex;
  align-items:center;
  height:${p => p.$h}px;
`;

const DocTabs = styled.div`
  display:flex;
  flex:none;
  height:15px;
  background:#222831;
`;

const DocTab = styled.button`
  display:flex;
  align-items:center;
  gap:5px;
  padding:2px 5px 0 4px;
  color:${p => p.$active ? "#f1f3f5" : "#c5c9d0"};
  background:${p => p.$active ? "#3f4959" : "#414b5a"};
  border-bottom:1px solid ${p => p.$active ? "#7fc0ea" : "#414b5a"};
  &:first-child{
    gap:2px;
  }
`;

const Status = styled.footer`
  display:flex;
  align-items:center;
  flex:none;
  height:16px;
  padding:1px 0 0 1px;
  background:#2d3341;
  border-bottom:1px solid #1b2028;
`;

const Count = styled.span`
  width:${p => p.$w}px;
  height:14px;
  padding:2px 0 0 3px;
  border-left:1px solid #7d8490;
`;

const Taskbar = styled.footer`
  display:grid;
  grid-template-columns:1fr auto 1fr;
  align-items:center;
  flex:none;
  height:27px;
  padding-top:3px;
  color:#27303b;
  background:linear-gradient(90deg, #f4e2db 14%, #d1e9f2 15%, #d1e9f2 20%, #f4e2db 21%, #f4e2db 25%, #f8ece6 30%, #f4e2db 36%, #f4e2db 55%, #d1e9f2 58%, #d1e9f2 68%, #f4e2db 70%);
`;

const Weather = styled.div`
  display:flex;
  align-items:center;
  gap:5px;
  padding-left:12px;
`;

const Sub = styled.div`
  color:#5b636d;
`;

const Dock = styled.div`
  display:flex;
  align-items:center;
  height:24px;
  padding-left:2px;
`;

const SearchBox = styled.label`
  display:flex;
  align-items:center;
  gap:7px;
  width:135px;
  height:18px;
  margin-left:3px;
  padding-left:6px;
  border-radius:9px;
  background:#fcf7f4;
  input{
    flex:1;
    min-width:0;
    outline:none;
  }
  input::placeholder{
    color:#4d565f;
    opacity:1;
  }
`;

const Apps = styled.div`
  display:grid;
  grid-template-columns:repeat(13, 1fr);
  width:360px;
  margin-left:1px;
`;

const AppButton = styled.button`
  position:relative;
  display:flex;
  align-items:center;
  justify-content:center;
  width:${p => p.$fixed ? "28px" : "auto"};
  height:22px;
  margin:0 ${p => p.$fixed ? 0 : 2}px;
  border-radius:3px;
  background:${p => p.$active ? "#fbf9f7" : "none"};
  ${p => p.$running && css`
    &::after{
      content:"";
      position:absolute;
      bottom:-1px;
      width:${p.$active ? 10 : 4}px;
      height:2px;
      border-radius:1px;
      background:${p.$active ? "#2d8ccc" : "#77818b"};
    }
  `}
`;

const Tray = styled.div`
  display:flex;
  align-items:center;
  justify-content:flex-end;
  height:24px;
  padding-right:12px;
`;

const Clock = styled.div`
  margin-left:7px;
  text-align:right;
`;
